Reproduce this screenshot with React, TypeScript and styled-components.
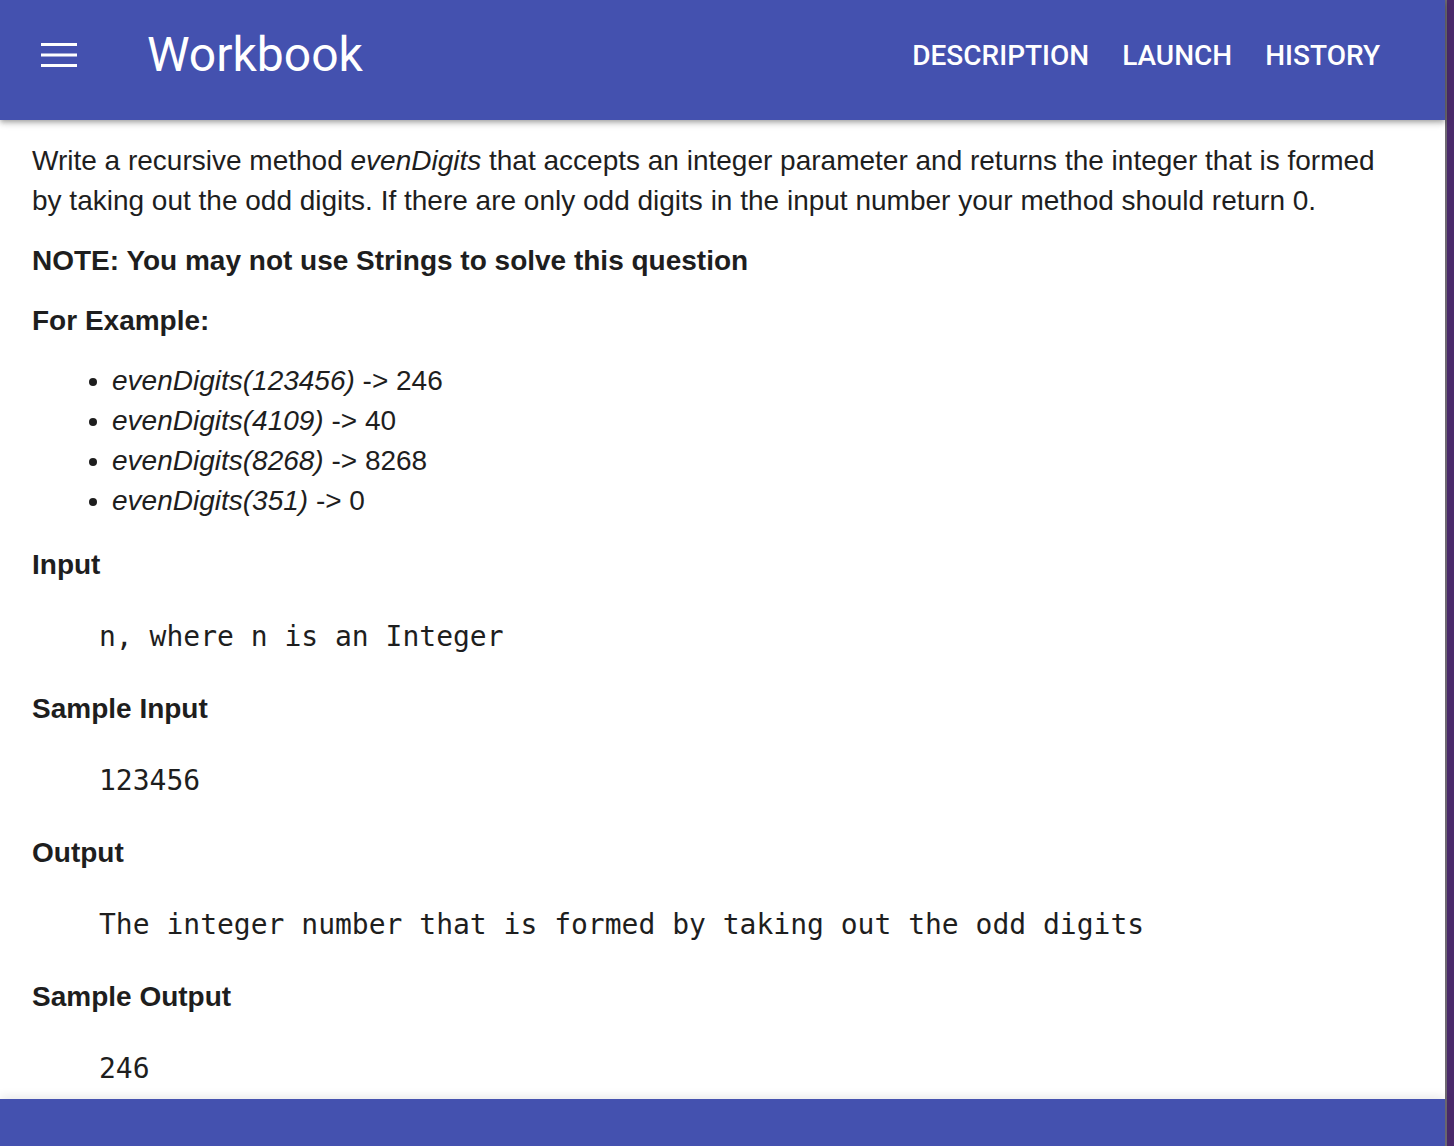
import styled, { createGlobalStyle } from 'styled-components';

const GlobalStyle = createGlobalStyle`
  html, body {
    margin: 0;
    padding: 0;
    height: 100%;
    overflow: hidden;
    background: #ffffff;
  }
  #root {
    height: 100%;
  }
`;

const Shell = styled.div`
  display: flex;
  height: 100vh;
`;

const Window = styled.div`
  width: 1445px;
  display: flex;
  flex-direction: column;
  background: #ffffff;
`;

const Edge = styled.div`
  flex: 1;
  background: #4a2a6b;
  border-left: 2px solid #6f6a72;
`;

const AppBar = styled.header`
  position: relative;
  z-index: 2;
  height: 120px;
  flex-shrink: 0;
  box-sizing: border-box;
  padding: 0 65px 10px 41px;
  display: flex;
  align-items: center;
  background: #4451af;
  color: #ffffff;
  box-shadow: 0 2px 4px -1px rgba(0, 0, 0, 0.2), 0 4px 5px 0 rgba(0, 0, 0, 0.14),
    0 1px 10px 0 rgba(0, 0, 0, 0.12);
`;

const MenuButton = styled.button`
  display: flex;
  padding: 0;
  border: none;
  background: none;
  color: inherit;
  cursor: pointer;
`;

const Title = styled.h1`
  margin: 0 0 0 70px;
  flex: 1;
  font-family: Roboto, 'Liberation Sans', sans-serif;
  font-size: 48px;
  font-weight: 400;
  line-height: 56px;
`;

const Nav = styled.nav`
  display: flex;
  gap: 33px;
`;

const NavLink = styled.a`
  font-family: Roboto, 'Liberation Sans', sans-serif;
  font-size: 28px;
  font-weight: 500;
  color: #ffffff;
  text-decoration: none;
  text-transform: uppercase;
  cursor: pointer;
`;

const Content = styled.main`
  flex: 1;
  overflow: hidden;
  display: flex;
  flex-direction: column;
  padding: 21px 48px 0 32px;
  font-family: 'Liberation Sans', Arial, sans-serif;
  font-size: 28px;
  line-height: 40px;
  color: #1e1e1e;
`;

const Para = styled.p<{ $bold?: boolean }>`
  margin: 0 0 20px;
  font-weight: ${p => (p.$bold ? 700 : 400)};
`;

const Examples = styled.ul`
  margin: 0 0 24px;
  padding-left: 80px;
`;

const SectionTitle = styled.h3`
  margin: 0;
  font-size: 28px;
  line-height: 40px;
  font-weight: 700;
`;

const Code = styled.pre`
  margin: 32px 0 32px 67px;
  font-family: 'DejaVu Sans Mono', 'Liberation Mono', monospace;
  font-size: 28px;
  line-height: 40px;
`;

const Footer = styled.footer`
  position: relative;
  z-index: 2;
  height: 47px;
  flex-shrink: 0;
  background: #4451af;
  box-shadow: 0 -2px 10px rgba(0, 0, 0, 0.1);
`;

const MenuIcon = () => (
  <svg width="36" height="24" viewBox="0 0 36 24" fill="currentColor">
    <rect x="0" y="0" width="36" height="3" />
    <rect x="0" y="10.5" width="36" height="3" />
    <rect x="0" y="21" width="36" height="3" />
  </svg>
);

const examples = [
  ['evenDigits(123456)', '246'],
  ['evenDigits(4109)', '40'],
  ['evenDigits(8268)', '8268'],
  ['evenDigits(351)', '0'],
];

const sections = [
  ['Input', 'n, where n is an Integer'],
  ['Sample Input', '123456'],
  ['Output', 'The integer number that is formed by taking out the odd digits'],
  ['Sample Output', '246'],
];

const App = () => {
  return (
    <Shell>
      <GlobalStyle />
      <Window>
        <AppBar>
          <MenuButton aria-label="menu">
            <MenuIcon />
          </MenuButton>
          <Title>Workbook</Title>
          <Nav>
            <NavLink>Description</NavLink>
            <NavLink>Launch</NavLink>
            <NavLink>History</NavLink>
          </Nav>
        </AppBar>

        <Content>
          <Para>
            Write a recursive method <em>evenDigits</em> that accepts an integer parameter and
            returns the integer that is formed by taking out the odd digits. If there are only odd
            digits in the input number your method should return 0.
          </Para>
          <Para $bold>NOTE: You may not use Strings to solve this question</Para>
          <Para $bold>For Example:</Para>
          <Examples>
            {examples.map(([call, result]) => (
              <li key={call}>
                <em>{call}</em> -&gt; {result}
              </li>
            ))}
          </Examples>
          {sections.map(([title, body]) => (
            <div key={title}>
              <SectionTitle>{title}</SectionTitle>
              <Code>{body}</Code>
            </div>
          ))}
        </Content>

        <Footer />
      </Window>
      <Edge />
    </Shell>
  );
};

export default App;
